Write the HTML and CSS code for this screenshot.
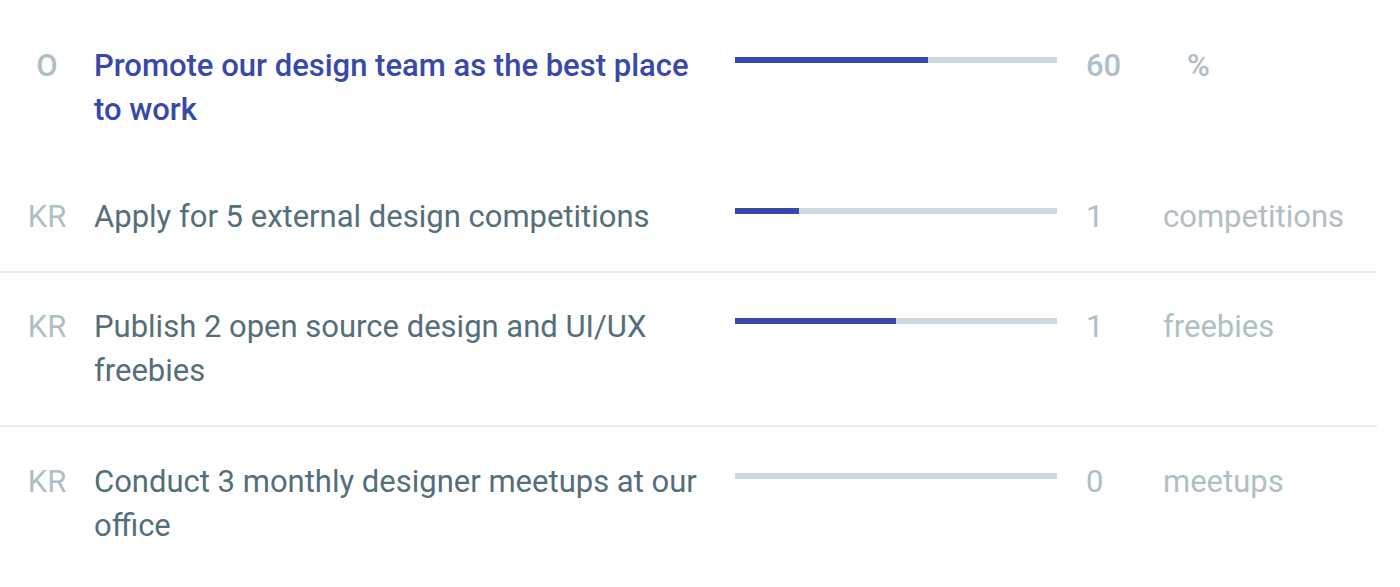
FILE: index.html
```html
<!DOCTYPE html>
<html lang="en">
<head>
  <meta charset="UTF-8" />
  <meta name="viewport" content="width=device-width, initial-scale=1" />
  <title>Objectives and key results</title>
  <link rel="stylesheet" href="styles.css">
</head>
<body>
  <div class="okr-list">
    <div class="okr-row objective">
      <span class="tag">O</span>
      <span class="title">Promote our design team as the best place to work</span>
      <div class="bar"><div class="fill" style="width: 60%"></div></div>
      <span class="value">60</span>
      <span class="unit unit-pct">%</span>
    </div>

    <div class="okr-row">
      <span class="tag">KR</span>
      <span class="title">Apply for 5 external design competitions</span>
      <div class="bar"><div class="fill" style="width: 20%"></div></div>
      <span class="value">1</span>
      <span class="unit">competitions</span>
    </div>

    <div class="okr-row">
      <span class="tag">KR</span>
      <span class="title">Publish 2 open source design and UI/UX freebies</span>
      <div class="bar"><div class="fill" style="width: 50%"></div></div>
      <span class="value">1</span>
      <span class="unit">freebies</span>
    </div>

    <div class="okr-row">
      <span class="tag">KR</span>
      <span class="title">Conduct 3 monthly designer meetups at our office</span>
      <div class="bar"><div class="fill" style="width: 0%"></div></div>
      <span class="value">0</span>
      <span class="unit">meetups</span>
    </div>
  </div>
</body>
</html>
```

FILE: styles.css
```css
body {
  margin: 0;
  padding: 0;
  background: #fff;
  font-family: Roboto, 'Noto Sans', sans-serif;
}

.okr-list {
  width: 1377px;
}

.okr-row {
  display: grid;
  grid-template-columns: 94px 641px 322px 106px 1fr;
  align-items: start;
  padding: 32px 0 32px;
  font-size: 31px;
  line-height: 44px;
  color: #546e7a;
  border-top: 2px solid #ebebeb;
}

.okr-row.objective {
  padding: 44px 0 31px;
  border-top: none;
  font-weight: 500;
}

.okr-row.objective + .okr-row {
  border-top: none;
}

.okr-row:last-child {
  padding-top: 33px;
}

.tag {
  text-align: center;
  color: #b0bec5;
}

.title {
  padding-right: 22px;
}

.objective .title {
  color: #3949ab;
}

.bar {
  height: 6px;
  margin-top: 13px;
  background: #cfd8dc;
}

.fill {
  height: 100%;
  background: #3949ab;
}

.value {
  padding-left: 29px;
  color: #b0bec5;
}

.unit {
  color: #b0bec5;
  white-space: nowrap;
}

.unit-pct {
  padding-left: 24px;
}
```
